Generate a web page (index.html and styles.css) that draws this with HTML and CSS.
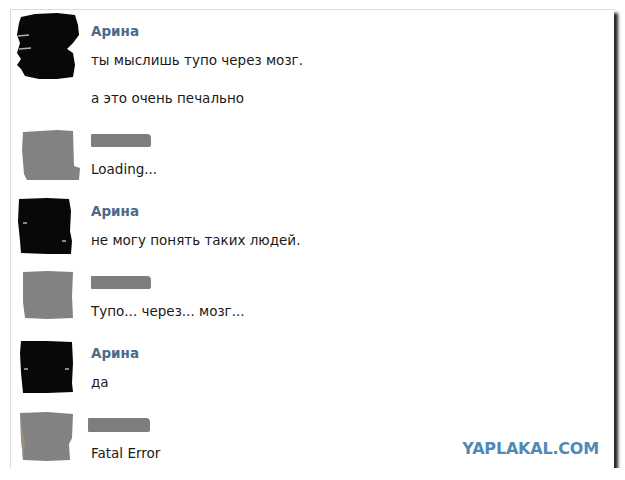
FILE: index.html
```html
<!DOCTYPE html>
<html lang="ru">
<head>
    <meta charset="UTF-8">
    <title>Арина</title>
    <link rel="stylesheet" href="styles.css">
</head>
<body>
<div class="frame">
    <div class="chat">

        <!--сообщение 1-->
        <div class="msg">
            <svg class="ava" viewBox="0 0 64 48">
                <path class="black" d="M4,-4 L18,-7 L40,-8 L58,-6 L61,4 L62,14 L56,22 L50,28 L56,32 L58,44 L56,56 L40,58 L22,58 L8,55 L4,48 L0,44 L4,38 L0,32 L3,22 L0,14 L2,2 Z"/>
                <path class="scratch" d="M1,15 L12,14 M2,28 L14,27"/>
            </svg>
            <div class="body">
                <div class="name">Арина</div>
                <div class="text">ты мыслишь тупо через мозг.</div>
                <div class="text second">а это очень печально</div>
            </div>
        </div>

        <!--сообщение 2-->
        <div class="msg">
            <svg class="ava" viewBox="0 0 64 48">
                <path class="gray" d="M6,2 L40,0 L56,1 L57,36 L63,38 L62,50 L30,50 L10,50 L7,44 L5,20 Z"/>
            </svg>
            <div class="body">
                <div class="name"><span class="bar"></span></div>
                <div class="text">Loading...</div>
            </div>
        </div>

        <!--сообщение 3-->
        <div class="msg">
            <svg class="ava" viewBox="0 0 64 48">
                <path class="black" d="M2,-2 L30,-3 L52,-2 L54,10 L53,30 L55,40 L54,53 L30,53 L4,52 L3,40 L1,20 Z"/>
                <path class="scratch" d="M6,22 L10,22 M45,40 L49,40"/>
            </svg>
            <div class="body">
                <div class="name">Арина</div>
                <div class="text">не могу понять таких людей.</div>
            </div>
        </div>

        <!--сообщение 4-->
        <div class="msg">
            <svg class="ava" viewBox="0 0 64 48">
                <path class="gray" d="M6,0 L30,-1 L56,0 L55,24 L56,46 L30,47 L8,46 L6,30 Z"/>
            </svg>
            <div class="body">
                <div class="name"><span class="bar"></span></div>
                <div class="text">Тупо... через... мозг...</div>
            </div>
        </div>

        <!--сообщение 5-->
        <div class="msg">
            <svg class="ava" viewBox="0 0 64 48">
                <path class="black" d="M4,-2 L30,-2 L55,-1 L56,20 L55,40 L56,49 L30,50 L6,50 L4,30 L3,10 Z"/>
                <path class="scratch" d="M7,26 L11,26 M48,26 L52,26"/>
            </svg>
            <div class="body">
                <div class="name">Арина</div>
                <div class="text">да</div>
            </div>
        </div>

        <!--сообщение 6-->
        <div class="msg">
            <svg class="ava" viewBox="0 0 64 48">
                <path class="gray" d="M3,-1 L30,-2 L56,0 L55,24 L52,30 L53,46 L30,47 L6,46 L4,24 Z"/>
                <path class="tan" d="M3,-1 L8,30 L6,46 L4,24 Z"/>
            </svg>
            <div class="body">
                <div class="name"><span class="bar bar-last"></span></div>
                <div class="text">Fatal Error</div>
            </div>
        </div>

    </div>
    <div class="mark">YAPLAKAL.COM</div>
</div>
</body>
</html>
```

FILE: styles.css
```css
body{
    margin: 0;
    padding: 9px 0 0 10px;
    background: #fff;
    font-family: "DejaVu Sans", Tahoma, sans-serif;
}

/*рамка с тенью*/
.frame{
    position: relative;
    width: 603px;
    height: 458px;
    border-top: 1px solid #dcdcdc;
    border-left: 1px solid #dcdcdc;
    box-shadow: 4px 4px 3px rgba(0, 0, 0, .85);
    background: #fff;
}

.chat{
    padding: 11px 0 0 6px;
}

.msg{
    display: flex;
    gap: 10px;
    padding-bottom: 22px;
}

.ava{
    width: 64px;
    height: 48px;
    overflow: visible;
    flex: none;
}
.black{ fill: #080808; }
.gray{ fill: #828282; }
.tan{ fill: #a89a78; opacity: .6; }
.scratch{ stroke: #b0b0b0; stroke-width: 1.5; }

.name{
    height: 20px;
    line-height: 20px;
    font-size: 13.5px;
    font-weight: bold;
    color: #4a6a8c;
}

.bar{
    display: inline-block;
    width: 60px;
    height: 13px;
    margin-top: 4px;
    vertical-align: top;
    background: #7e7e7e;
    border-radius: 1px 4px 2px 1px;
}
.bar-last{
    width: 62px;
    height: 14px;
    margin-left: -3px;
}

.text{
    line-height: 20px;
    margin-top: 9px;
    font-size: 13.5px;
    color: #1a1a1a;
}
.text.second{
    margin-top: 18px;
}

/*водяной знак*/
.mark{
    position: absolute;
    right: 15px;
    bottom: 10px;
    font-family: "DejaVu Sans", sans-serif;
    font-weight: bold;
    font-size: 16px;
    letter-spacing: -.2px;
    color: #4f8ab6;
}
```
